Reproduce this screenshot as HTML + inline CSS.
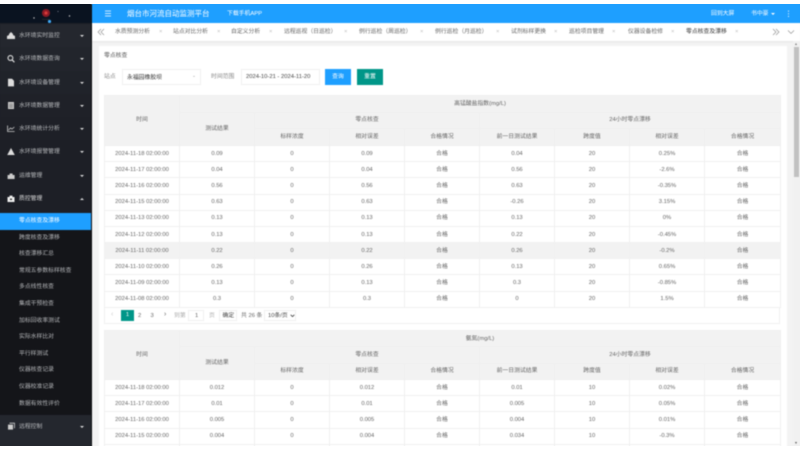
<!DOCTYPE html>
<html lang="zh-CN"><head><meta charset="utf-8"><title>烟台市河流自动监测平台</title>
<style>
html,body{margin:0;padding:0;background:#fff;width:800px;height:450px;overflow:hidden}
*{box-sizing:border-box}
#clip{position:absolute;left:0;top:4px;width:800px;height:442px;overflow:hidden}
#app{position:absolute;left:0;top:0;width:800px;height:442px;background:#f3f3f3;box-shadow:0 0 0 5px #f3f3f3;font:5.83px "Liberation Sans","Noto Sans CJK SC",sans-serif;color:#666;filter:blur(.4px)}
.a{position:absolute;white-space:nowrap;line-height:8px}
#side{position:absolute;left:0;top:0;width:92px;height:448px;background:#1d1f26;border-right:1px solid #0b0c0f;box-shadow:-5px 0 0 #1d1f26}
#logo{position:absolute;left:0;top:0;width:91px;height:19px;background:#0a1320;box-shadow:-5px -5px 0 #0a1320,0 -5px 0 #0a1320,-5px 0 0 #0a1320}
#side .m{position:absolute;left:0;width:91px;height:23.4px;color:#b9bbbe}
#side .m span{position:absolute;left:19px;top:8.2px;line-height:8px;white-space:nowrap}
#side .m svg{position:absolute;left:7px;top:7.2px;width:8px;height:9px}
#side .m i{position:absolute;left:80px;top:11.2px;border:2.4px solid transparent;border-top:2.8px solid #ddd;border-bottom:0}
#side .m i.u{border-top:0;border-bottom:2.8px solid #ddd}
#side .s{position:absolute;left:0;width:91px;height:16.6px;line-height:16.6px;padding-left:19px;color:#b5b7ba;background:#141519;box-shadow:-5px 0 0 #141519}
#side .s.on{background:#1e9fff;color:#fff;box-shadow:-5px 0 0 #1e9fff}
#head{position:absolute;left:92px;top:0;width:708px;height:19px;background:#1e9fff;color:#fff;box-shadow:0 -5px 0 #1e9fff,5px 0 0 #1e9fff,5px -5px 0 #1e9fff}
#tabs{position:absolute;left:92px;top:19px;width:708px;height:18px;background:#fff;box-shadow:0 1px 2px rgba(0,0,0,.06),5px 0 0 #fff}
#tabs .a{top:5px}
#card{position:absolute;left:99px;top:42px;width:688px;height:406px;background:#fff}
#track{position:absolute;left:793px;top:37px;width:7px;height:411px;background:#f1f1f1;box-shadow:5px 0 0 #f1f1f1}
#thumb{position:absolute;left:794px;top:43px;width:5px;height:130px;background:#c1c1c1}
table{position:absolute;left:104px;width:676px;border-collapse:collapse;table-layout:fixed;background:#fff}
td,th{border:.5px solid #f0f0f0;padding:0;text-align:center;font-weight:400;overflow:hidden;white-space:nowrap;line-height:8px}
thead th{background:#f2f2f2;border-color:#efefef}
#t1 tbody tr{height:16.2px}
#t1 thead tr{height:16.67px}
#t2 tbody tr{height:16.2px}
#t2 thead tr{height:16.33px}
tr.h td{background:#f2f2f2}
.box{position:absolute;border:.5px solid #ddd;background:#fff}
</style></head><body>
<div id="clip">
<div id="app">
<div id="side">
<div id="logo">
<svg width="91" height="19" style="position:absolute;left:0;top:0"><circle cx="46" cy="9" r="4" fill="#8c1a24"/><circle cx="46" cy="9" r="1.6" fill="#d63a3a"/><circle cx="49.5" cy="17.5" r="1.6" fill="#3fa9f5"/><circle cx="34" cy="14" r=".7" fill="#ccc"/><circle cx="58" cy="7.5" r=".5" fill="#99a"/><circle cx="69.5" cy="12" r=".7" fill="#ccc"/><rect x="42" y="15" width="8" height=".6" fill="#333"/></svg>
</div>
<div class="m" style="top:20px;background:#24272e"><svg viewBox="0 0 8 9"><path d="M0 8V5l2-1V3l2-2 2 2v1l2 1v3z" fill="#ddd"/></svg><span>水环境实时监控</span><i></i></div>
<div class="m" style="top:43.2px;background:#22252c"><svg viewBox="0 0 8 9"><circle cx="3.4" cy="4" r="2.4" fill="none" stroke="#ddd" stroke-width="1.1"/><path d="M5 5.8l2.4 2.4" stroke="#ddd" stroke-width="1.2"/></svg><span>水环境数据查询</span><i></i></div>
<div class="m" style="top:66.5px;background:#20232a"><svg viewBox="0 0 8 9"><path d="M1 .8h4l2 2v5.6H1z" fill="#ddd"/></svg><span>水环境设备管理</span><i></i></div>
<div class="m" style="top:89.7px;background:#1f2128"><svg viewBox="0 0 8 9"><rect x="1" y="1" width="6" height="7" fill="#ccc"/><path d="M2 3h4M2 4.6h4M2 6.2h4" stroke="#555" stroke-width=".6"/></svg><span>水环境数据管理</span><i></i></div>
<div class="m" style="top:113px;background:#1e2027"><svg viewBox="0 0 8 9"><path d="M.6 1.5v6h7" fill="none" stroke="#ccc" stroke-width=".8"/><path d="M1.5 6l2-2 1.5 1L7.4 3" fill="none" stroke="#ccc" stroke-width=".8"/></svg><span>水环境统计分析</span><i></i></div>
<div class="m" style="top:136.2px;background:#1d1f26"><svg viewBox="0 0 8 9"><path d="M4 1l3.8 7H.2z" fill="#ddd"/></svg><span>水环境报警管理</span><i></i></div>
<div class="m" style="top:159.4px;background:#1d1f26"><svg viewBox="0 0 8 9"><path d="M.6 8V4h2V2.5h3V4h2v4z" fill="#ccc"/></svg><span>运维管理</span><i></i></div>
<div class="m" style="top:182.7px;background:#1d1f26;color:#ddd"><svg viewBox="0 0 8 9"><path d="M.5 8V3h2V1.6h3V3h2v5z" fill="#eee"/><rect x="3" y="4.6" width="2" height="1.4" fill="#333"/></svg><span>质控管理</span><i class="u"></i></div>
<div class="s on" style="top:209px">零点核查及漂移</div>
<div class="s" style="top:225.6px">跨度核查及漂移</div>
<div class="s" style="top:242.2px">核查漂移汇总</div>
<div class="s" style="top:258.8px">常规五参数标样核查</div>
<div class="s" style="top:275.4px">多点线性核查</div>
<div class="s" style="top:292px">集成干预检查</div>
<div class="s" style="top:308.6px">加标回收率测试</div>
<div class="s" style="top:325.2px">实际水样比对</div>
<div class="s" style="top:341.8px">平行样测试</div>
<div class="s" style="top:358.4px">仪器核查记录</div>
<div class="s" style="top:375px">仪器校准记录</div>
<div class="s" style="top:391.6px;height:20px">数据有效性评价</div>
<div class="m" style="top:411px;height:37px;background:#24272e;box-shadow:-5px 0 0 #24272e"><svg viewBox="0 0 8 9" style="top:7px"><rect x="1" y="2.6" width="5" height="5" fill="#ccc"/><path d="M2.5 1.2h5v5" fill="none" stroke="#ccc" stroke-width=".8"/></svg><span style="top:7.5px">远程控制</span><i style="top:11px"></i></div>
</div>

<div id="head">
<svg width="8" height="7" style="position:absolute;left:12px;top:6px"><path d="M1 1h6M1 3.5h6M1 6h6" stroke="#fff" stroke-width=".8"/></svg>
<div class="a" style="left:35px;top:5px;font-size:7.5px;line-height:9px">烟台市河流自动监测平台</div>
<div class="a" style="left:135px;top:5.5px">下载手机APP</div>
<div class="a" style="left:619px;top:5.5px">回到大屏</div>
<div class="a" style="left:659px;top:5.5px">书中豪</div>
<div style="position:absolute;left:679px;top:8.5px;border:2.2px solid transparent;border-top:2.6px solid #fff;border-bottom:0"></div>
<svg width="3" height="8" style="position:absolute;left:695px;top:5.5px"><path d="M1.5 .5v1.2M1.5 3.2v1.2M1.5 5.8V7" stroke="#fff" stroke-width=".8"/></svg>
</div>

<div id="tabs">
<svg width="8" height="8" style="position:absolute;left:5px;top:5px"><path d="M4 1L1 4l3 3M7 1L4 4l3 3" fill="none" stroke="#888" stroke-width=".6"/></svg>
<div class="a" style="left:23px">水质预测分析</div><div class="a" style="left:67px;color:#bbb">×</div>
<div class="a" style="left:81px">站点对比分析</div><div class="a" style="left:125px;color:#bbb">×</div>
<div class="a" style="left:139px">自定义分析</div><div class="a" style="left:177px;color:#bbb">×</div>
<div class="a" style="left:192px">远程巡视（日巡检）</div><div class="a" style="left:252px;color:#bbb">×</div>
<div class="a" style="left:267px">例行巡检（周巡检）</div><div class="a" style="left:328px;color:#bbb">×</div>
<div class="a" style="left:343px">例行巡检（月巡检）</div><div class="a" style="left:404px;color:#bbb">×</div>
<div class="a" style="left:419px">试剂标样更换</div><div class="a" style="left:462px;color:#bbb">×</div>
<div class="a" style="left:477px">巡检项目管理</div><div class="a" style="left:520px;color:#bbb">×</div>
<div class="a" style="left:536px">仪器设备检修</div><div class="a" style="left:579px;color:#bbb">×</div>
<div class="a" style="left:594px;color:#333">零点核查及漂移</div><div class="a" style="left:643px;color:#bbb">×</div>
<svg width="8" height="8" style="position:absolute;left:680px;top:5px"><path d="M1 1l3 3-3 3M4 1l3 3-3 3" fill="none" stroke="#888" stroke-width=".6"/></svg>
<svg width="8" height="8" style="position:absolute;left:695px;top:5px"><path d="M1 2.5l3 3 3-3" fill="none" stroke="#888" stroke-width=".6"/></svg>
</div>

<div id="card"></div>
<div id="track"></div><div id="thumb"></div>
<div style="position:absolute;left:794.5px;top:39px;border:1.5px solid transparent;border-bottom:2px solid #777;border-top:0"></div>
<div style="position:absolute;left:794.5px;top:438px;border:1.5px solid transparent;border-top:2px solid #555;border-bottom:0"></div>

<div class="a" style="left:104px;top:48px;color:#555">零点核查</div>
<div class="a" style="left:104px;top:69px;color:#888">站点</div>
<div class="box" style="left:122px;top:65px;width:79px;height:16px;border-color:#f0f0f0"></div>
<div class="a" style="left:127px;top:69.5px;color:#333">永福园橡胶坝</div>
<div style="position:absolute;left:193px;top:72px;border:1.6px solid transparent;border-top:1.8px solid #aaa;border-bottom:0"></div>
<div class="a" style="left:211px;top:69px;color:#888">时间范围</div>
<div class="box" style="left:241px;top:65px;width:79px;height:16px;border-color:#f0f0f0"></div>
<div class="a" style="left:246px;top:69px;color:#444">2024-10-21 - 2024-11-20</div>
<div class="a" style="left:325px;top:65px;width:26px;height:16px;background:#1e9fff;color:#fff;text-align:center;line-height:16px">查询</div>
<div class="a" style="left:357px;top:65px;width:26px;height:16px;background:#009688;color:#fff;text-align:center;line-height:16px">重置</div>

<table id="t1" style="top:91px">
<colgroup><col style="width:75px"><col style="width:75px"><col style="width:75px"><col style="width:75px"><col style="width:75px"><col style="width:75px"><col style="width:75px"><col style="width:75px"><col style="width:76px"></colgroup>
<thead>
<tr><th rowspan="3">时间</th><th colspan="8">高锰酸盐指数(mg/L)</th></tr>
<tr><th rowspan="2">测试结果</th><th colspan="3">零点核查</th><th colspan="4">24小时零点漂移</th></tr>
<tr><th>标样浓度</th><th>相对误差</th><th>合格情况</th><th>前一日测试结果</th><th>跨度值</th><th>相对误差</th><th>合格情况</th></tr>
</thead>
<tbody>
<tr><td>2024-11-18 02:00:00</td><td>0.09</td><td>0</td><td>0.09</td><td>合格</td><td>0.04</td><td>20</td><td>0.25%</td><td>合格</td></tr>
<tr><td>2024-11-17 02:00:00</td><td>0.04</td><td>0</td><td>0.04</td><td>合格</td><td>0.56</td><td>20</td><td>-2.6%</td><td>合格</td></tr>
<tr><td>2024-11-16 02:00:00</td><td>0.56</td><td>0</td><td>0.56</td><td>合格</td><td>0.63</td><td>20</td><td>-0.35%</td><td>合格</td></tr>
<tr><td>2024-11-15 02:00:00</td><td>0.63</td><td>0</td><td>0.63</td><td>合格</td><td>-0.26</td><td>20</td><td>3.15%</td><td>合格</td></tr>
<tr><td>2024-11-13 02:00:00</td><td>0.13</td><td>0</td><td>0.13</td><td>合格</td><td>0.13</td><td>20</td><td>0%</td><td>合格</td></tr>
<tr><td>2024-11-12 02:00:00</td><td>0.13</td><td>0</td><td>0.13</td><td>合格</td><td>0.22</td><td>20</td><td>-0.45%</td><td>合格</td></tr>
<tr class="h"><td>2024-11-11 02:00:00</td><td>0.22</td><td>0</td><td>0.22</td><td>合格</td><td>0.26</td><td>20</td><td>-0.2%</td><td>合格</td></tr>
<tr><td>2024-11-10 02:00:00</td><td>0.26</td><td>0</td><td>0.26</td><td>合格</td><td>0.13</td><td>20</td><td>0.65%</td><td>合格</td></tr>
<tr><td>2024-11-09 02:00:00</td><td>0.13</td><td>0</td><td>0.13</td><td>合格</td><td>0.3</td><td>20</td><td>-0.85%</td><td>合格</td></tr>
<tr><td>2024-11-08 02:00:00</td><td>0.3</td><td>0</td><td>0.3</td><td>合格</td><td>0</td><td>20</td><td>1.5%</td><td>合格</td></tr>
</tbody></table>

<div style="position:absolute;left:104px;top:303px;width:676px;height:16.5px;border:.5px solid #f0f0f0;border-top:0"></div>
<div class="a" style="left:111px;top:307px;color:#ccc;font-size:7px">‹</div>
<div class="a" style="left:121px;top:306px;width:13px;height:11px;background:#009688;color:#fff;text-align:center;line-height:11px">1</div>
<div class="a" style="left:138px;top:307.5px">2</div>
<div class="a" style="left:150.5px;top:307.5px">3</div>
<div class="a" style="left:164px;top:307px;font-size:7px">›</div>
<div class="a" style="left:174px;top:307.5px;color:#aaa">到第</div>
<div class="box" style="left:188px;top:306px;width:16px;height:11px;border-color:#f0f0f0"></div>
<div class="a" style="left:195px;top:307.5px">1</div>
<div class="a" style="left:209px;top:307.5px;color:#aaa">页</div>
<div class="box" style="left:219px;top:306px;width:18px;height:11px;border-color:#f0f0f0"></div>
<div class="a" style="left:222.5px;top:307.5px;color:#444">确定</div>
<div class="a" style="left:241px;top:307.5px">共 26 条</div>
<div class="box" style="left:264px;top:306px;width:32px;height:11px;border-color:#f0f0f0"></div>
<div class="a" style="left:268px;top:307.5px;color:#444">10条/页</div>
<svg width="5" height="4" style="position:absolute;left:290px;top:310px"><path d="M.7.8l1.8 1.8L4.3.8" fill="none" stroke="#333" stroke-width=".8"/></svg>

<table id="t2" style="top:326px">
<colgroup><col style="width:75px"><col style="width:75px"><col style="width:75px"><col style="width:75px"><col style="width:75px"><col style="width:75px"><col style="width:75px"><col style="width:75px"><col style="width:76px"></colgroup>
<thead>
<tr><th rowspan="3">时间</th><th colspan="8">氨氮(mg/L)</th></tr>
<tr><th rowspan="2">测试结果</th><th colspan="3">零点核查</th><th colspan="4">24小时零点漂移</th></tr>
<tr><th>标样浓度</th><th>相对误差</th><th>合格情况</th><th>前一日测试结果</th><th>跨度值</th><th>相对误差</th><th>合格情况</th></tr>
</thead>
<tbody>
<tr><td>2024-11-18 02:00:00</td><td>0.012</td><td>0</td><td>0.012</td><td>合格</td><td>0.01</td><td>10</td><td>0.02%</td><td>合格</td></tr>
<tr><td>2024-11-17 02:00:00</td><td>0.01</td><td>0</td><td>0.01</td><td>合格</td><td>0.005</td><td>10</td><td>0.05%</td><td>合格</td></tr>
<tr><td>2024-11-16 02:00:00</td><td>0.005</td><td>0</td><td>0.005</td><td>合格</td><td>0.004</td><td>10</td><td>0.01%</td><td>合格</td></tr>
<tr><td>2024-11-15 02:00:00</td><td>0.004</td><td>0</td><td>0.004</td><td>合格</td><td>0.034</td><td>10</td><td>-0.3%</td><td>合格</td></tr>
<tr><td></td><td></td><td></td><td></td><td></td><td></td><td></td><td></td><td></td></tr>
</tbody></table>
</div>
</div>
</body></html>
